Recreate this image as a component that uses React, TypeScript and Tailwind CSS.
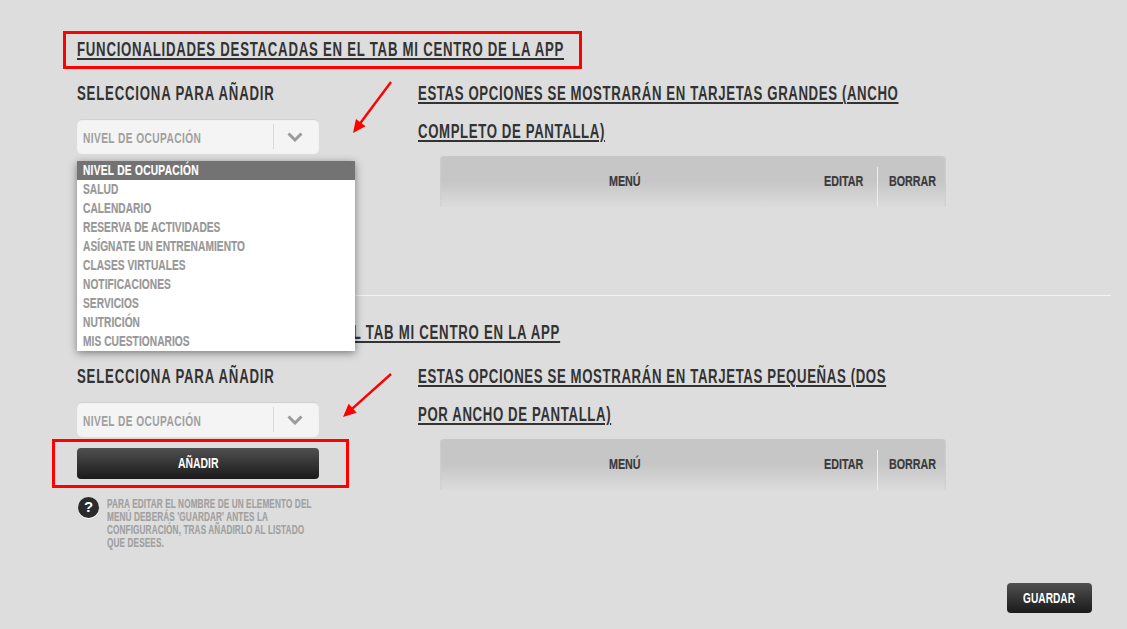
import React from "react";

const font = { fontFamily: '"Liberation Sans",sans-serif' };

function T({ c, children }: { c: string; children: React.ReactNode }) {
  return <span className={"inline-block whitespace-nowrap font-bold " + c}>{children}</span>;
}

function Select() {
  return (
    <div className="flex h-[35px] w-[242px] items-center rounded-[5px] bg-[#f4f4f4] shadow-[inset_0_1px_1px_#cfcfcf]">
      <span className="flex-1 pl-[6px] pt-[5px] text-[14.5px] text-[#a0a0a0]">
        <T c="origin-left scale-x-[0.7] tracking-[0.6px]">NIVEL DE OCUPACIÓN</T>
      </span>
      <span className="h-[25px] w-px bg-[#d8d8d8]" />
      <span className="flex w-[45px] justify-center pr-[4px] pt-px">
        <svg width="16" height="10" viewBox="0 0 16 10"><path d="M1.5 1.5 8 8l6.5-6.5" fill="none" stroke="#9b9b9b" strokeWidth="3" /></svg>
      </span>
    </div>
  );
}

function Table() {
  return (
    <div className="ml-[22px] mt-[6px] flex h-[51px] w-[506px] rounded-t-[4px] bg-[linear-gradient(#c6c6c6,#c6c6c6_50%,#dcdcdc)] pl-[169px] pt-[11px] text-[14.5px] text-[#3a3a3a] shadow-[inset_2px_0_2px_-1px_#cfcfcf,inset_-2px_0_2px_-1px_#cfcfcf]">
      <span className="w-[215px] flex-none pt-[4px]"><T c="origin-left scale-x-[0.74] [-webkit-text-stroke:0.2px]">MENÚ</T></span>
      <span className="w-[53px] flex-none pt-[4px]"><T c="origin-left scale-x-[0.74] [-webkit-text-stroke:0.2px]">EDITAR</T></span>
      <span className="w-px flex-none bg-[#ededed]" />
      <span className="ml-[11px] w-[45px] flex-none pt-[4px]"><T c="origin-left scale-x-[0.74] [-webkit-text-stroke:0.2px]">BORRAR</T></span>
    </div>
  );
}

function Arrow({ className, x1, y1, x2, y2 }: { className: string; x1: number; y1: number; x2: number; y2: number }) {
  const w = Math.abs(x1 - x2) + 4, h = Math.abs(y1 - y2) + 4;
  const a = Math.atan2(y2 - y1, x2 - x1);
  const tipX = 2, tipY = h - 2;
  const sx = w - 2, sy = 2;
  const bx = (d: number, o: number) => `${tipX - Math.cos(a) * d - Math.sin(a) * o},${tipY - Math.sin(a) * d + Math.cos(a) * o}`;
  return (
    <svg className={className} width={w} height={h}>
      <line x1={sx} y1={sy} x2={tipX - Math.cos(a) * 8} y2={tipY - Math.sin(a) * 8} stroke="#f00" strokeWidth="2.4" />
      <polygon points={`${tipX},${tipY} ${bx(13, 6)} ${bx(13, -6)}`} fill="#f00" />
    </svg>
  );
}

const noteLines = ["PARA EDITAR EL NOMBRE DE UN ELEMENTO DEL", "MENÚ DEBERÁS 'GUARDAR' ANTES LA", "CONFIGURACIÓN, TRAS AÑADIRLO AL LISTADO", "QUE DESEES."];

function Section({ title, sub1, sub2, button }: { title: string; sub1: string; sub2: string; button?: boolean }) {
  return (
    <section>
      <h2 className="text-[20px] leading-[24px] text-[#333]">
        <T c="origin-left scale-x-[0.66] tracking-[1.14px] underline decoration-2 underline-offset-2">{title}</T>
      </h2>
      <div className="mt-[13px] flex">
        <div className="w-[341px]">
          <h3 className="h-[38px] text-[20px] leading-[38px] text-[#333]">
            <T c="origin-left scale-x-[0.66] tracking-[1.2px]">SELECCIONA PARA AÑADIR</T>
          </h3>
          <div className="mt-[7px]"><Select /></div>
          {button && (
            <>
              <button className="mt-[11px] block h-[31px] w-[242px] rounded-[4px] bg-[linear-gradient(#505050,#1a1a1a)] text-[14.5px] text-white">
                <T c="origin-center scale-x-[0.72]">AÑADIR</T>
              </button>
              <div className="mt-[18px] flex w-[242px]">
                <span className="ml-px flex h-[21px] w-[21px] flex-none items-center justify-center rounded-full bg-[#2b2b2b] text-[15px] font-bold text-white shadow-[0_1px_0_#fff]">?</span>
                <div className="ml-[8px] mt-[1px] text-[12px] leading-[13px] text-[#a0a0a0]">
                  {noteLines.map((l) => <div key={l}><T c="origin-left scale-x-[0.685] tracking-[0.15px] [-webkit-text-stroke:0.15px]">{l}</T></div>)}
                </div>
              </div>
            </>
          )}
        </div>
        <div className="w-[500px]">
          <h3 className="text-[20px] leading-[38px] text-[#333]">
            <div><T c="origin-left scale-x-[0.66] tracking-[0.95px] underline decoration-2 underline-offset-2">{sub1}</T></div>
            <div><T c="origin-left scale-x-[0.66] tracking-[0.95px] underline decoration-2 underline-offset-2">{sub2}</T></div>
          </h3>
          <Table />
        </div>
      </div>
    </section>
  );
}

const items = ["SALUD", "CALENDARIO", "RESERVA DE ACTIVIDADES", "ASÍGNATE UN ENTRENAMIENTO", "CLASES VIRTUALES", "NOTIFICACIONES", "SERVICIOS", "NUTRICIÓN", "MIS CUESTIONARIOS"];

export default function App() {
  return (
    <div className="relative h-[629px] w-[1127px] overflow-hidden bg-[#dddddd] pl-[77px] pt-[37px]" style={font}>
      <Section title="FUNCIONALIDADES DESTACADAS EN EL TAB MI CENTRO DE LA APP" sub1="ESTAS OPCIONES SE MOSTRARÁN EN TARJETAS GRANDES (ANCHO" sub2="COMPLETO DE PANTALLA)" />
      <div className="mt-[88px] h-px w-[1034px] bg-[#f4f4f4]" />
      <div className="mt-[24px]">
        <Section title="FUNCIONALIDADES DE ACCESOS EN EL TAB MI CENTRO EN LA APP" sub1="ESTAS OPCIONES SE MOSTRARÁN EN TARJETAS PEQUEÑAS (DOS" sub2="POR ANCHO DE PANTALLA)" button />
      </div>

      <ul className="absolute left-[77px] top-[161px] h-[190px] w-[278px] bg-white text-[14.5px] leading-[18px] text-[#979797] shadow-[0_2px_8px_rgba(0,0,0,0.45)]">
        <li className="h-[19px] bg-[#737373] pl-[6px] text-white"><T c="origin-left scale-x-[0.7] tracking-[0.4px] [-webkit-text-stroke:0.2px]">NIVEL DE OCUPACIÓN</T></li>
        {items.map((t) => <li key={t} className="h-[19px] pl-[6px]"><T c="origin-left scale-x-[0.7] tracking-[0.1px] [-webkit-text-stroke:0.2px]">{t}</T></li>)}
      </ul>

      <button className="absolute left-[1007px] top-[583px] h-[30px] w-[85px] rounded-[4px] bg-[linear-gradient(#505050,#1a1a1a)] pt-px text-[14.5px] text-white">
        <T c="origin-center scale-x-[0.7]">GUARDAR</T>
      </button>

      <div className="absolute left-[63px] top-[31px] h-[38px] w-[519px] border-[3px] border-[#f00]" />
      <div className="absolute left-[52px] top-[439px] h-[49px] w-[297px] border-[3px] border-[#f00]" />
      <Arrow className="absolute left-[351px] top-[80px]" x1={391} y1={82} x2={353} y2={133} />
      <Arrow className="absolute left-[341px] top-[372px]" x1={391} y1={374} x2={343} y2={417} />
    </div>
  );
}
